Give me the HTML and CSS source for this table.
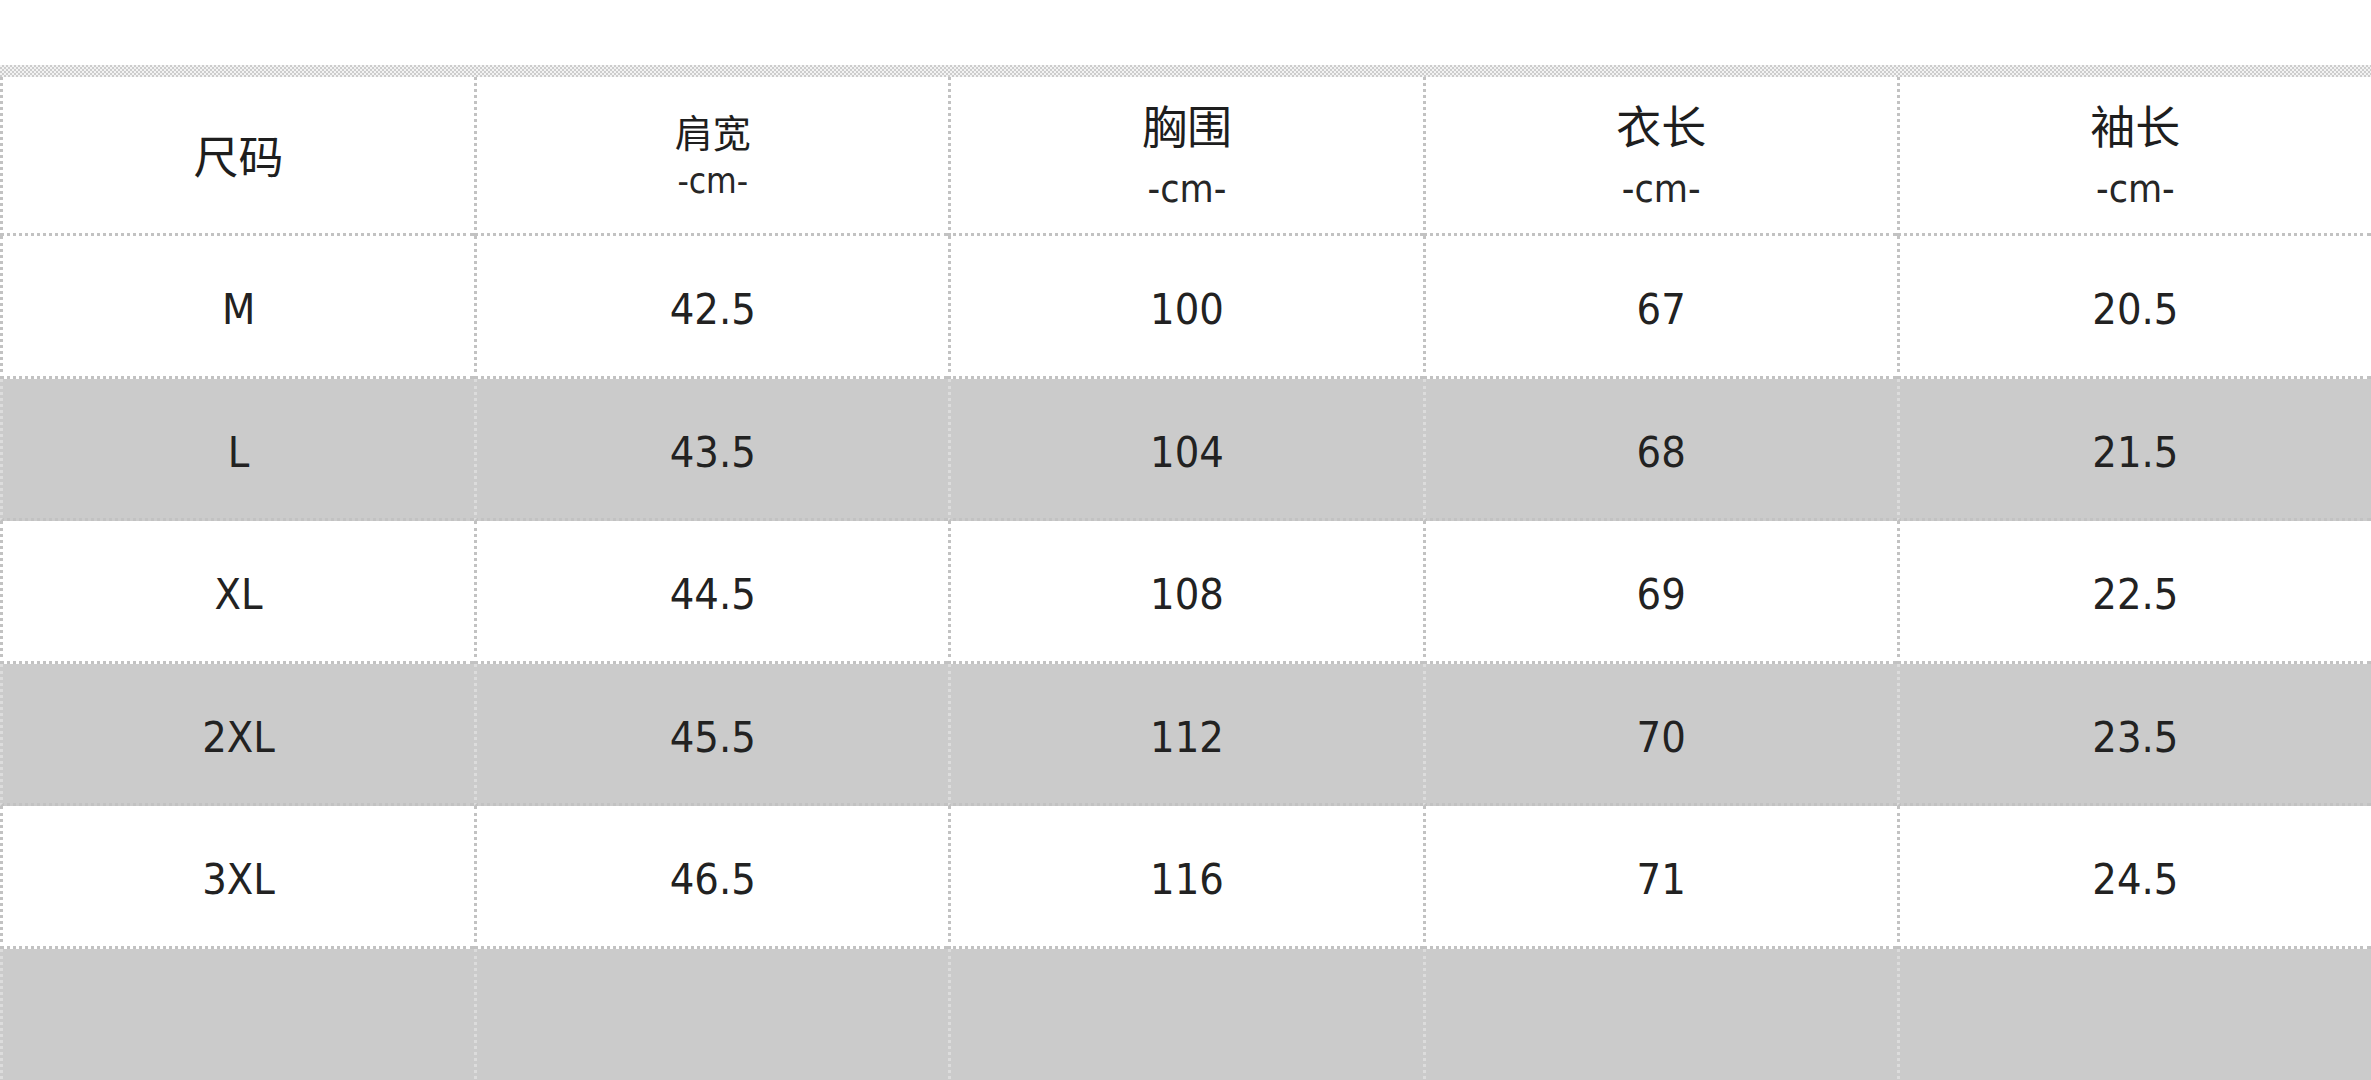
FILE: index.html
```html
<!DOCTYPE html>
<html lang="zh-CN">
<head>
<meta charset="utf-8">
<title>尺码表</title>
<link rel="stylesheet" href="styles.css">
</head>
<body>
<div class="sheet">
  <div class="band"></div>
  <table class="size-table">
    <colgroup><col><col><col><col><col></colgroup>
    <thead>
      <tr class="head">
        <th><span class="cn">尺码</span></th>
        <th class="small"><span class="cn">肩宽</span><span class="unit">-cm-</span></th>
        <th><span class="cn">胸围</span><span class="unit">-cm-</span></th>
        <th><span class="cn">衣长</span><span class="unit">-cm-</span></th>
        <th><span class="cn">袖长</span><span class="unit">-cm-</span></th>
      </tr>
    </thead>
    <tbody>
      <tr><td>M</td><td>42.5</td><td>100</td><td>67</td><td>20.5</td></tr>
      <tr class="alt"><td>L</td><td>43.5</td><td>104</td><td>68</td><td>21.5</td></tr>
      <tr><td>XL</td><td>44.5</td><td>108</td><td>69</td><td>22.5</td></tr>
      <tr class="alt"><td>2XL</td><td>45.5</td><td>112</td><td>70</td><td>23.5</td></tr>
      <tr><td>3XL</td><td>46.5</td><td>116</td><td>71</td><td>24.5</td></tr>
      <tr class="alt"><td></td><td></td><td></td><td></td><td></td></tr>
    </tbody>
  </table>
</div>
</body>
</html>
```

FILE: styles.css
```css
html, body {
  margin: 0;
  padding: 0;
  background: #ffffff;
  overflow: hidden;
}

body {
  width: 2371px;
  height: 1080px;
  font-family: "DejaVu Sans Condensed", "DejaVu Sans", "Noto Sans CJK SC", sans-serif;
  font-stretch: semi-condensed;
  color: #222;
}

.sheet {
  padding-top: 65px;
}

.band {
  height: 12px;
  background-image: repeating-conic-gradient(#cdcdcd 0 25%, #f3f3f3 0 50%);
  background-size: 4px 4px;
}

.size-table {
  width: 100%;
  table-layout: fixed;
  border-collapse: separate;
  border-spacing: 0;
}

.size-table th,
.size-table td {
  box-sizing: border-box;
  padding: 0;
  text-align: center;
  vertical-align: middle;
  border-left: 3px dotted #c2c2c2;
  border-bottom: 3px dotted #c2c2c2;
  font-weight: normal;
}

.head th {
  height: 159px;
  line-height: 1;
}

.cn {
  display: block;
  font-family: "Noto Sans CJK SC", sans-serif;
  font-size: 45px;
  line-height: 48px;
  color: #1e1e1e;
}

.unit {
  display: block;
  font-size: 39px;
  line-height: 40px;
  margin-top: 20px;
  color: #262626;
}

.small .cn {
  font-size: 38px;
  line-height: 40px;
}

.small .unit {
  font-size: 35px;
  line-height: 36px;
  margin-top: 12px;
}

.size-table tbody td {
  height: 142.5px;
  padding-top: 7px;
  font-size: 43px;
}

.alt td {
  background: #cbcbcb;
  border-left-color: #dcdcdc;
}
```
